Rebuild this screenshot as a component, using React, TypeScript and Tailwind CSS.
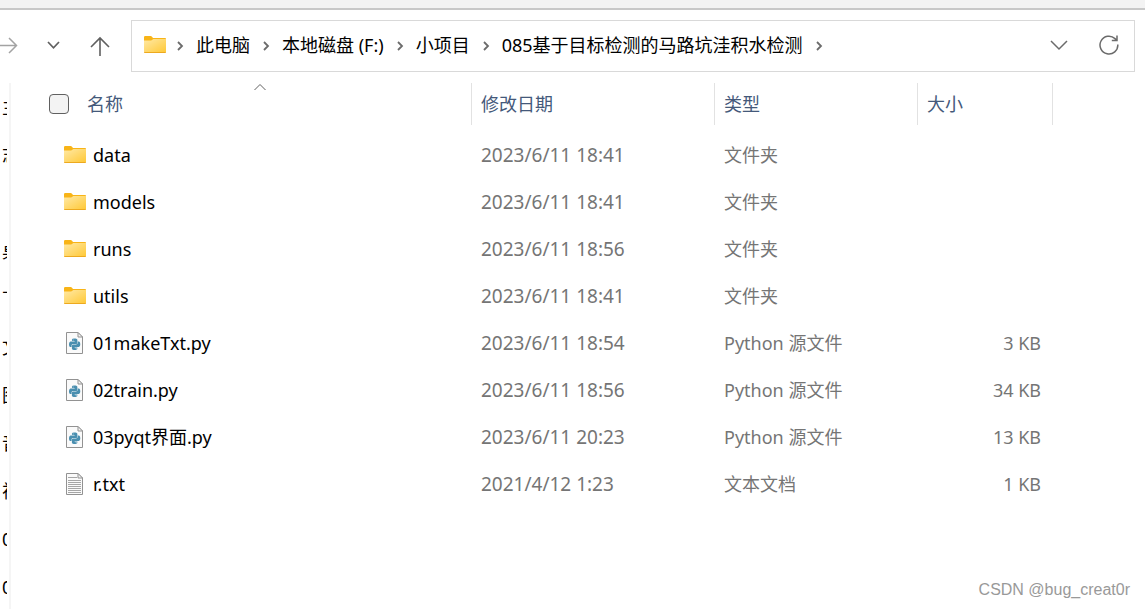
import { Fragment } from "react";

type Kind = "folder" | "python" | "text";

interface Entry {
  name: string;
  date: string;
  kind: Kind;
  size: string;
}

const entries: Entry[] = [
  { name: "data", date: "2023/6/11 18:41", kind: "folder", size: "" },
  { name: "models", date: "2023/6/11 18:41", kind: "folder", size: "" },
  { name: "runs", date: "2023/6/11 18:56", kind: "folder", size: "" },
  { name: "utils", date: "2023/6/11 18:41", kind: "folder", size: "" },
  { name: "01makeTxt.py", date: "2023/6/11 18:54", kind: "python", size: "3 KB" },
  { name: "02train.py", date: "2023/6/11 18:56", kind: "python", size: "34 KB" },
  { name: "03pyqt界面.py", date: "2023/6/11 20:23", kind: "python", size: "13 KB" },
  { name: "r.txt", date: "2021/4/12 1:23", kind: "text", size: "1 KB" },
];

const kindLabel: Record<Kind, string> = {
  folder: "文件夹",
  python: "Python 源文件",
  text: "文本文档",
};

const crumbs = ["此电脑", "本地磁盘 (F:)", "小项目", "085基于目标检测的马路坑洼积水检测"];

const places = ["主", "志", "", "桌", "下", "文", "图", "音", "视", "0", "0"];

function FolderIcon() {
  return (
    <svg width="24" height="20" viewBox="0 0 24 20" aria-hidden="true" className="shrink-0">
      <defs>
        <linearGradient id="folder-face" x1="0" y1="0" x2="1" y2="1">
          <stop offset="0" stopColor="#ffe9a6" />
          <stop offset="1" stopColor="#ffc938" />
        </linearGradient>
      </defs>
      <path d="M1 2.2Q1 1 2.2 1H7.6Q8.3 1 8.8 1.6L10 3H22.2Q23 3 23 4V8H1Z" fill="#f8b417" />
      <path d="M1 5.4H8.2L10.4 4H23V17H1Z" fill="url(#folder-face)" />
      <path d="M1 17H23V17.2Q23 18 22.2 18H1.8Q1 18 1 17.2Z" fill="#eda91f" />
    </svg>
  );
}

function Sheet({ children }: { children: React.ReactNode }) {
  return (
    <svg width="24" height="24" viewBox="0 0 24 24" aria-hidden="true" className="shrink-0">
      <path d="M3.5 1.5H15L19.5 6V22.5H3.5Z" fill="#fafafa" stroke="#929292" />
      {children}
      <path d="M15 1.5V6H19.5Z" fill="#f4f4f4" stroke="#929292" />
    </svg>
  );
}

function PythonIcon() {
  return (
    <Sheet>
      <g transform="translate(6 7.6) scale(.47)" fill="#4a8fb0">
        <path d="M11.9 0C6 0 6.3 2.6 6.3 2.6V5.3H12V6.1H4S0 5.7 0 12s3.4 6 3.4 6h2.1v-2.9s-.1-3.4 3.4-3.4h5.7s3.2 0 3.2-3.1V3.2S18.3 0 11.9 0ZM8.8 1.8a1 1 0 1 1 0 2.1 1 1 0 0 1 0-2.1Z" />
        <path d="M12.1 24c5.9 0 5.6-2.6 5.6-2.6v-2.7H12v-.8h8S24 18.3 24 12s-3.4-6-3.4-6h-2.1v2.9s.1 3.4-3.4 3.4H9.4s-3.2 0-3.2 3.1v5.4S5.7 24 12.1 24Zm3.1-1.8a1 1 0 1 1 0-2.1 1 1 0 0 1 0 2.1Z" />
      </g>
    </Sheet>
  );
}

function TextIcon() {
  return (
    <Sheet>
      <path
        d="M5 5.5H14M5 8.5H18M5 10.5H18M5 12.5H18M5 14.5H18M5 16.5H18M5 18.5H18M5 20.5H18"
        stroke="#a6a6a6"
      />
    </Sheet>
  );
}

function KindIcon({ kind }: { kind: Kind }) {
  if (kind === "folder") return <FolderIcon />;
  if (kind === "python") return <PythonIcon />;
  return <TextIcon />;
}

function CrumbArrow() {
  return (
    <svg width="8" height="12" viewBox="0 0 8 12" fill="none" aria-hidden="true" className="shrink-0">
      <path d="M2 3L6 7L2 11" stroke="#6b6b6b" strokeWidth="1.8" />
    </svg>
  );
}

function NavBar() {
  return (
    <nav className="flex shrink-0 items-center pt-[10px] pr-[10px] pb-[11px]">
      <button type="button" aria-label="前进" className="flex h-8 w-8 items-center">
        <svg width="18" height="20" viewBox="0 0 18 20" fill="none" stroke="#a3a3a3" strokeWidth="1.5">
          <path d="M0 9.5H16.5M9 2L16.5 9.5L9 17" />
        </svg>
      </button>
      <button type="button" aria-label="最近浏览的位置" className="flex h-8 w-11 items-center justify-center">
        <svg width="14" height="10" viewBox="0 0 14 10" fill="none" stroke="#606060" strokeWidth="1.7">
          <path d="M1 1L6.5 6.8L12 1" />
        </svg>
      </button>
      <button type="button" aria-label="上移" className="flex h-8 w-12 items-center justify-center">
        <svg width="20" height="20" viewBox="0 0 20 20" fill="none" stroke="#606060" strokeWidth="1.6">
          <path d="M10 20V2M1 11L10 2L19 11" />
        </svg>
      </button>
      <div className="ml-[7px] flex h-[52px] min-w-0 flex-1 items-center border border-[#d9d9d9] pr-[9px] pb-[2px] pl-[11px]">
        <FolderIcon />
        <ol className="flex min-w-0 flex-1 items-center gap-3 pl-[9px] whitespace-nowrap">
          <li className="flex items-center">
            <CrumbArrow />
          </li>
          {crumbs.map((crumb) => (
            <Fragment key={crumb}>
              <li>
                <a href="#" className="text-black">
                  {crumb}
                </a>
              </li>
              <li className="flex items-center">
                <CrumbArrow />
              </li>
            </Fragment>
          ))}
        </ol>
        <button type="button" aria-label="以前的位置" className="flex h-8 w-8 items-center justify-center">
          <svg width="18" height="12" viewBox="0 0 18 12" fill="none" stroke="#6b6b6b" strokeWidth="1.5">
            <path d="M1 2L9 10L17 2" />
          </svg>
        </button>
        <button type="button" aria-label="刷新" className="ml-[18px] flex h-8 w-8 items-center justify-center">
          <svg width="20" height="20" viewBox="0 0 20 20" fill="none" stroke="#6b6b6b" strokeWidth="1.5">
            <path d="M18.8 9.5A8.9 8.9 0 1 1 16 3.6L17.6 5.2M18 .5V5.6H12.8" />
          </svg>
        </button>
      </div>
    </nav>
  );
}

const headCell = "border-r border-[#e2e2e2] p-0 pl-[9px] text-left font-normal text-[#44597a]";

function FileTable() {
  return (
    <table className="w-full table-fixed border-separate border-spacing-0">
      <colgroup>
        <col />
        <col className="w-[243px]" />
        <col className="w-[203px]" />
        <col className="w-[135px]" />
        <col className="w-[92px]" />
      </colgroup>
      <thead>
        <tr className="h-[42px]">
          <th className="relative border-r border-[#e2e2e2] p-0 pl-[38px] text-left font-normal text-[#44597a]">
            <div className="flex items-center gap-[18px]">
              <input
                id="select-all"
                type="checkbox"
                aria-label="全选"
                className="h-5 w-5 appearance-none rounded border border-[#606060] bg-[#f3f3f3]"
              />
              <label htmlFor="select-all">名称</label>
            </div>
            <svg
              width="14"
              height="8"
              viewBox="0 0 14 8"
              fill="none"
              aria-hidden="true"
              className="absolute top-0 left-1/2 -translate-x-1/2 translate-x-[12px]"
            >
              <path d="M1.5 7L7 1.5L12.5 7" stroke="#606060" />
            </svg>
          </th>
          <th className={headCell}>修改日期</th>
          <th className={headCell}>类型</th>
          <th className={headCell}>大小</th>
          <th className="p-0" />
        </tr>
        <tr className="h-[6px]" aria-hidden="true" />
      </thead>
      <tbody>
        {entries.map((entry) => (
          <tr key={entry.name} className="h-[47px]">
            <td className="p-0 pl-[52px] text-black">
              <div className="flex items-center gap-[6px]">
                <KindIcon kind={entry.kind} />
                <span>{entry.name}</span>
              </div>
            </td>
            <td className="p-0 pl-[9px] text-[19px] text-[#757575]">{entry.date}</td>
            <td className="p-0 pl-[9px] text-[#757575]">{kindLabel[entry.kind]}</td>
            <td className="p-0 pr-3 text-right text-[#757575]">{entry.size}</td>
            <td className="p-0" />
          </tr>
        ))}
      </tbody>
    </table>
  );
}

export default function App() {
  return (
    <div className="relative flex h-screen flex-col overflow-hidden bg-white font-['Noto_Sans','Noto_Sans_CJK_SC',sans-serif] text-[18px] leading-6">
      <div className="h-[10px] shrink-0 border-b-2 border-[#c8c8c8] bg-[#f3f3f3]" />
      <NavBar />
      <div className="flex min-h-0 flex-1">
        <aside className="flex w-[11px] shrink-0 border-r-2 border-[#f5f5f5]">
          <ul className="w-[7px] overflow-hidden pl-[2px] text-black">
            {places.map((place, index) => (
              <li key={index} className="flex h-12 items-center whitespace-nowrap">
                {place}
              </li>
            ))}
          </ul>
        </aside>
        <main className="min-w-0 flex-1">
          <FileTable />
        </main>
      </div>
      <p className="absolute right-[15px] bottom-[7px] font-['Liberation_Sans',sans-serif] text-[16px] text-[#999999]">
        CSDN @bug_creat0r
      </p>
    </div>
  );
}
